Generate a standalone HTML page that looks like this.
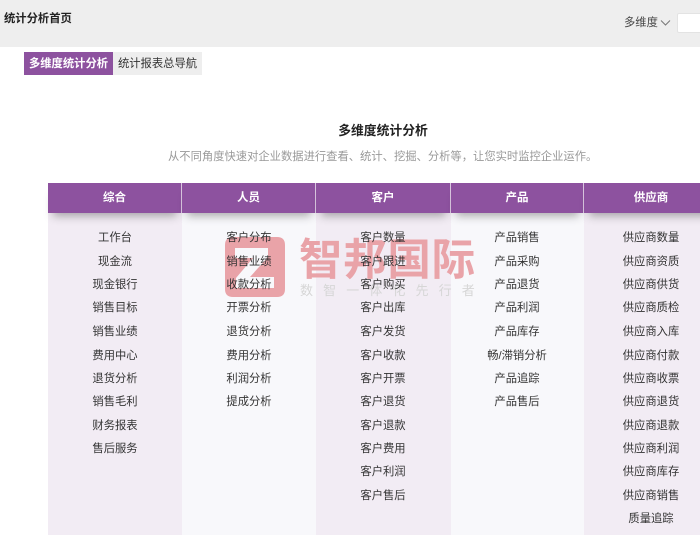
<!DOCTYPE html>
<html lang="zh-CN">
<head>
<meta charset="utf-8">
<style>
html,body{margin:0;padding:0;width:700px;height:535px;overflow:hidden;background:#fff}
body{font-family:"Liberation Sans","Noto Sans CJK SC",sans-serif;position:relative;color:#333}
.abs{position:absolute;white-space:nowrap}
#top{position:absolute;left:0;top:0;width:700px;height:47px;background:#eee}
.col{position:absolute;top:183px;height:352px;width:134px;background:#f2ecf4}
.col.alt{background:#f8f8fb}
.hd{position:absolute;left:0;top:0;right:0;height:30px;line-height:31px;background:#8d529f;color:#fff;font-size:11.5px;font-weight:700;text-align:center;box-shadow:0 8px 9px -5px rgba(40,40,40,.38);z-index:2}
.hd.sep{border-right:1px solid #d9c6df;box-sizing:border-box}
.it{position:absolute;left:0;width:100%;text-align:center;font-size:11.3px;line-height:16px;color:#333;z-index:5}
</style>
</head>
<body>
<div id="top"></div>
<div class="abs" style="left:4px;top:11px;font-size:11.3px;line-height:16px;font-weight:700;color:#222">统计分析首页</div>
<div class="abs" style="left:624px;top:15px;font-size:11.3px;line-height:16px;color:#444">多维度</div>
<svg class="abs" style="left:660px;top:19px" width="11" height="8" viewBox="0 0 11 8"><path d="M1 1.5 L5.5 6 L10 1.5" fill="none" stroke="#777" stroke-width="1"/></svg>
<div class="abs" style="left:677px;top:13px;width:30px;height:18px;background:#fff;border:1px solid #e3e3e3;border-radius:2px"></div>

<div class="abs" style="left:24px;top:52px;width:89px;height:23px;line-height:24px;background:#8d529f;color:#fff;font-size:11.3px;font-weight:700;text-align:center">多维度统计分析</div>
<div class="abs" style="left:113px;top:52px;width:89px;height:23px;line-height:24px;background:#eee;color:#333;font-size:11.3px;text-align:center">统计报表总导航</div>

<div class="abs" style="left:0;width:766px;top:123px;font-size:12.8px;line-height:16px;font-weight:700;color:#222;text-align:center">多维度统计分析</div>
<div class="abs" style="left:168px;top:149px;font-size:11.3px;line-height:16px;color:#999">从不同角度快速对企业数据进行查看、统计、挖掘、分析等，让您实时监控企业运作。</div>

<div class="col" style="left:48px"><div class="hd sep">综合</div></div>
<div class="col alt" style="left:182px"><div class="hd sep">人员</div></div>
<div class="col" style="left:316px;width:135px"><div class="hd sep">客户</div></div>
<div class="col alt" style="left:451px;width:133px"><div class="hd sep">产品</div></div>
<div class="col" style="left:584px"><div class="hd">供应商</div></div>

<!-- col 1 -->
<div style="position:absolute;left:48px;top:1px;width:134px">
<div class="it" style="top:229px">工作台</div>
<div class="it" style="top:252.5px">现金流</div>
<div class="it" style="top:276px">现金银行</div>
<div class="it" style="top:299px">销售目标</div>
<div class="it" style="top:323px">销售业绩</div>
<div class="it" style="top:346.5px">费用中心</div>
<div class="it" style="top:370px">退货分析</div>
<div class="it" style="top:393px">销售毛利</div>
<div class="it" style="top:416.5px">财务报表</div>
<div class="it" style="top:440px">售后服务</div>
</div>
<!-- col 2 -->
<div style="position:absolute;left:182px;top:1px;width:134px">
<div class="it" style="top:229px">客户分布</div>
<div class="it" style="top:252.5px">销售业绩</div>
<div class="it" style="top:276px">收款分析</div>
<div class="it" style="top:299px">开票分析</div>
<div class="it" style="top:323px">退货分析</div>
<div class="it" style="top:346.5px">费用分析</div>
<div class="it" style="top:370px">利润分析</div>
<div class="it" style="top:393px">提成分析</div>
</div>
<!-- col 3 -->
<div style="position:absolute;left:316px;top:1px;width:134px">
<div class="it" style="top:229px">客户数量</div>
<div class="it" style="top:252.5px">客户跟进</div>
<div class="it" style="top:276px">客户购买</div>
<div class="it" style="top:299px">客户出库</div>
<div class="it" style="top:323px">客户发货</div>
<div class="it" style="top:346.5px">客户收款</div>
<div class="it" style="top:370px">客户开票</div>
<div class="it" style="top:393px">客户退货</div>
<div class="it" style="top:416.5px">客户退款</div>
<div class="it" style="top:440px">客户费用</div>
<div class="it" style="top:463px">客户利润</div>
<div class="it" style="top:486.5px">客户售后</div>
</div>
<!-- col 4 -->
<div style="position:absolute;left:450px;top:1px;width:134px">
<div class="it" style="top:229px">产品销售</div>
<div class="it" style="top:252.5px">产品采购</div>
<div class="it" style="top:276px">产品退货</div>
<div class="it" style="top:299px">产品利润</div>
<div class="it" style="top:323px">产品库存</div>
<div class="it" style="top:346.5px">畅/滞销分析</div>
<div class="it" style="top:370px">产品追踪</div>
<div class="it" style="top:393px">产品售后</div>
</div>
<!-- col 5 -->
<div style="position:absolute;left:584px;top:1px;width:134px">
<div class="it" style="top:229px">供应商数量</div>
<div class="it" style="top:252.5px">供应商资质</div>
<div class="it" style="top:276px">供应商供货</div>
<div class="it" style="top:299px">供应商质检</div>
<div class="it" style="top:323px">供应商入库</div>
<div class="it" style="top:346.5px">供应商付款</div>
<div class="it" style="top:370px">供应商收票</div>
<div class="it" style="top:393px">供应商退货</div>
<div class="it" style="top:416.5px">供应商退款</div>
<div class="it" style="top:440px">供应商利润</div>
<div class="it" style="top:463px">供应商库存</div>
<div class="it" style="top:486.5px">供应商销售</div>
<div class="it" style="top:510px">质量追踪</div>
</div>

<!-- watermark -->
<svg class="abs" style="left:225px;top:237px;z-index:3" width="60" height="60" viewBox="0 0 60 60">
<path fill="#e9a3a8" fill-rule="evenodd" d="M8 0H52Q60 0 60 8V52Q60 60 52 60H8Q0 60 0 52V8Q0 0 8 0Z M10 11V21H28L11 41V51H49V40H25L43 20V11Z"/>
</svg>
<div class="abs" style="left:299px;top:230px;font-size:43.5px;line-height:54px;font-weight:700;color:#e9a3a8;letter-spacing:.7px;z-index:3;font-family:'Noto Sans CJK SC',sans-serif">智邦国际</div>
<div class="abs" style="left:300px;top:283px;font-size:13px;line-height:16px;color:#d6d6d6;letter-spacing:10.1px;z-index:3">数智一体化先行者</div>
</body>
</html>
